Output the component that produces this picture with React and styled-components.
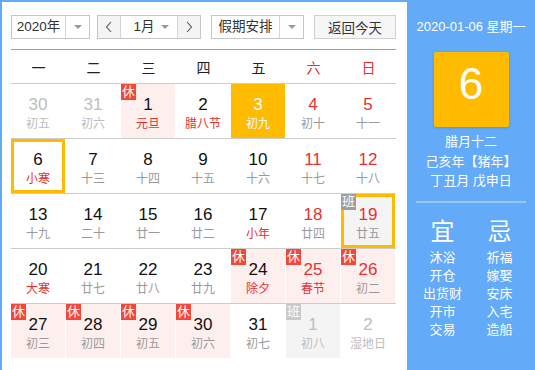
import React from 'react'
import styled, { createGlobalStyle } from 'styled-components'

const GlobalStyle = createGlobalStyle`
    body{
        margin:0;
        font-family:"Liberation Sans","Noto Sans CJK SC",sans-serif;
        background:#fff;
    }
`

const weekNames = ['一', '二', '三', '四', '五', '六', '日']

// o: other month, w: weekend number, f: festival text, b: badge
const weeks = [
    [
        { d: 30, l: '初五', o: 1, w: 0 },
        { d: 31, l: '初六', o: 1 },
        { d: 1, l: '元旦', f: 1, b: '休' },
        { d: 2, l: '腊八节', f: 1 },
        { d: 3, l: '初九', today: 1 },
        { d: 4, l: '初十', w: 1 },
        { d: 5, l: '十一', w: 1 },
    ],
    [
        { d: 6, l: '小寒', f: 1, sel: 1 },
        { d: 7, l: '十三' },
        { d: 8, l: '十四' },
        { d: 9, l: '十五' },
        { d: 10, l: '十六' },
        { d: 11, l: '十七', w: 1 },
        { d: 12, l: '十八', w: 1 },
    ],
    [
        { d: 13, l: '十九' },
        { d: 14, l: '二十' },
        { d: 15, l: '廿一' },
        { d: 16, l: '廿二' },
        { d: 17, l: '小年', f: 1 },
        { d: 18, l: '廿四', w: 1 },
        { d: 19, l: '廿五', w: 1, b: '班', sel: 1 },
    ],
    [
        { d: 20, l: '大寒', f: 1 },
        { d: 21, l: '廿七' },
        { d: 22, l: '廿八' },
        { d: 23, l: '廿九' },
        { d: 24, l: '除夕', f: 1, b: '休' },
        { d: 25, l: '春节', f: 1, w: 1, b: '休' },
        { d: 26, l: '初二', w: 1, b: '休' },
    ],
    [
        { d: 27, l: '初三', b: '休' },
        { d: 28, l: '初四', b: '休' },
        { d: 29, l: '初五', b: '休' },
        { d: 30, l: '初六', b: '休' },
        { d: 31, l: '初七' },
        { d: 1, l: '初八', o: 1, b: '班' },
        { d: 2, l: '湿地日', o: 1 },
    ],
]

const yi = ['沐浴', '开仓', '出货财', '开市', '交易']
const ji = ['祈福', '嫁娶', '安床', '入宅', '造船']

const Arrow = () => <Caret />

const Chevron = ({ dir }) => (
    <svg width="8" height="12" viewBox="0 0 8 12">
        <path
            d={dir === 'left' ? 'M6 1 L1.5 6 L6 11' : 'M2 1 L6.5 6 L2 11'}
            fill="none"
            stroke="#555"
            strokeWidth="1.1"
        />
    </svg>
)

const App = () => {
    return (
        <>
            <GlobalStyle />
            <Widget>
                <Main>
                    <Toolbar>
                        <Select $w={79} $arrow={23}>
                            <SelectText>2020年</SelectText>
                            <SelectArrow><Arrow /></SelectArrow>
                        </Select>
                        <MonthGroup>
                            <NavButton><Chevron dir="left" /></NavButton>
                            <MonthSelect>
                                <SelectText>1月</SelectText>
                                <Arrow />
                            </MonthSelect>
                            <NavButton><Chevron dir="right" /></NavButton>
                        </MonthGroup>
                        <Select $w={93} $arrow={24}>
                            <SelectText>假期安排</SelectText>
                            <SelectArrow><Arrow /></SelectArrow>
                        </Select>
                        <TodayButton>返回今天</TodayButton>
                    </Toolbar>
                    <WeekHeader>
                        {weekNames.map((n, i) => (
                            <WeekName key={n} $red={i > 4}>{n}</WeekName>
                        ))}
                    </WeekHeader>
                    <Grid>
                        {weeks.map((week, r) => (
                            <Row key={r}>
                                {week.map((c, i) => {
                                    const kind = c.today ? 'today' : c.b === '休' ? 'rest' : c.b === '班' ? 'work' : 'plain'
                                    return (
                                        <Cell key={i} $kind={kind} $sel={c.sel}>
                                            {c.b && <Badge $kind={c.b === '休' ? 'rest' : c.o ? 'workLight' : 'work'}>{c.b}</Badge>}
                                            <DayNum $o={c.o} $red={c.w} $today={c.today}>{c.d}</DayNum>
                                            <Lunar $o={c.o} $red={c.f} $today={c.today}>{c.l}</Lunar>
                                        </Cell>
                                    )
                                })}
                            </Row>
                        ))}
                    </Grid>
                </Main>
                <Side>
                    <SideDate>2020-01-06 星期一</SideDate>
                    <BigDay>6</BigDay>
                    <SideLunar>
                        <div>腊月十二</div>
                        <div>己亥年【猪年】</div>
                        <div>丁丑月 戊申日</div>
                    </SideLunar>
                    <SideLine />
                    <Almanac>
                        <AlmanacCol>
                            <AlmanacHead>宜</AlmanacHead>
                            {yi.map(t => <AlmanacItem key={t}>{t}</AlmanacItem>)}
                        </AlmanacCol>
                        <AlmanacCol>
                            <AlmanacHead>忌</AlmanacHead>
                            {ji.map(t => <AlmanacItem key={t}>{t}</AlmanacItem>)}
                        </AlmanacCol>
                    </Almanac>
                </Side>
            </Widget>
        </>
    )
}

const blue = '#63aaf8'
const yellow = '#ffbb00'

const Widget = styled.div`
    width:533px;
    height:380px;
    border:2px solid ${blue};
    border-right:none;
    display:flex;
`

const Main = styled.div`
    width:385px;
    padding:13px 11px 0 9px;
    background:#fff;
`

const Toolbar = styled.div`
    display:flex;
    align-items:center;
    height:24px;
    padding-bottom:10px;
    border-bottom:1px solid ${blue};
    color:#333;
    font-size:13.5px;
`

const Select = styled.div`
    width:${p => p.$w}px;
    height:24px;
    box-sizing:border-box;
    border:1px solid #c6c6c6;
    display:flex;
    margin-right:10px;
    &:first-child{
        margin-right:7px;
    }
`

const SelectText = styled.span`
    flex:1;
    display:flex;
    align-items:center;
    justify-content:center;
    line-height:22px;
`

const SelectArrow = styled.span`
    width:23px;
    border-left:1px solid #d4d4d4;
    display:flex;
    align-items:center;
    justify-content:center;
`

const Caret = styled.span`
    width:0;
    height:0;
    border-left:4px solid transparent;
    border-right:4px solid transparent;
    border-top:4px solid #999;
`

const MonthGroup = styled.div`
    width:104px;
    height:24px;
    box-sizing:border-box;
    border:1px solid #c6c6c6;
    display:flex;
    margin-right:10px;
`

const NavButton = styled.span`
    width:22px;
    background:#f4f4f4;
    display:flex;
    align-items:center;
    justify-content:center;
    &:first-child{
        border-right:1px solid #d4d4d4;
    }
    &:last-child{
        border-left:1px solid #d4d4d4;
    }
`

const MonthSelect = styled.span`
    flex:1;
    display:flex;
    align-items:center;
    padding-right:8px;
    ${SelectText}{
        padding-left:6px;
    }
`

const TodayButton = styled.div`
    width:82px;
    height:24px;
    box-sizing:border-box;
    border:1px solid #d0d0d0;
    background:#f6f6f6;
    display:flex;
    align-items:center;
    justify-content:center;
`

const WeekHeader = styled.div`
    display:grid;
    grid-template-columns:repeat(7,55px);
    height:33px;
    border-bottom:1px solid #cccccc;
`

const WeekName = styled.div`
    display:flex;
    align-items:center;
    justify-content:center;
    font-size:14px;
    color:${p => (p.$red ? '#e8312f' : '#222')};
`

const Grid = styled.div`
    display:flex;
    flex-direction:column;
`

const Row = styled.div`
    display:grid;
    grid-template-columns:repeat(7,55px);
    height:54px;
    & + &{
        border-top:1px solid #cccccc;
    }
`

const cellBg = {
    today: yellow,
    rest: '#fdefee',
    work: '#f4f4f4',
    plain: '#fff',
}

const Cell = styled.div`
    position:relative;
    width:54px;
    height:54px;
    box-sizing:border-box;
    background:${p => cellBg[p.$kind]};
    border:${p => (p.$sel ? `3px solid ${yellow}` : 'none')};
    padding-top:${p => (p.$sel ? 8 : 11)}px;
    text-align:center;
`

const badgeBg = {
    rest: '#f4473b',
    work: '#9e9e9e',
    workLight: '#c9c9c9',
}

const Badge = styled.span`
    position:absolute;
    left:${p => (p.$kind === 'work' ? -3 : 0)}px;
    top:${p => (p.$kind === 'work' ? -3 : 0)}px;
    width:15px;
    height:16px;
    background:${p => badgeBg[p.$kind]};
    color:#fff;
    font-size:13px;
    line-height:16px;
    text-align:center;
`

const DayNum = styled.div`
    font-size:17px;
    line-height:20px;
    color:${p => (p.$today ? '#fff' : p.$o ? '#bdbdbd' : p.$red ? '#e8312f' : '#111')};
`

const Lunar = styled.div`
    font-size:12px;
    line-height:18px;
    color:${p => (p.$today ? '#fff' : p.$o ? '#bdbdbd' : p.$red ? '#e8312f' : '#9a9a9a')};
`

const Side = styled.div`
    flex:1;
    background:${blue};
    color:#fff;
    display:flex;
    flex-direction:column;
    align-items:center;
    padding-top:16px;
`

const SideDate = styled.div`
    font-size:13px;
    line-height:18px;
`

const BigDay = styled.div`
    margin-top:16px;
    width:75px;
    height:75px;
    box-sizing:border-box;
    padding-top:8px;
    background:${yellow};
    border-radius:2px;
    box-shadow:0 1px 3px rgba(0,0,0,0.15);
    font-size:44px;
    line-height:48px;
    text-align:center;
`

const SideLunar = styled.div`
    margin-top:5px;
    font-size:13px;
    line-height:19.5px;
    text-align:center;
`

const SideLine = styled.div`
    width:110px;
    height:2px;
    margin-top:10px;
    background:rgba(255,255,255,0.35);
`

const Almanac = styled.div`
    display:flex;
    margin-top:14px;
`

const AlmanacCol = styled.div`
    width:57px;
    display:flex;
    flex-direction:column;
    align-items:center;
`

const AlmanacHead = styled.div`
    font-size:24px;
    line-height:30px;
    margin-bottom:2px;
`

const AlmanacItem = styled.div`
    font-size:13px;
    line-height:18px;
`

export default App
